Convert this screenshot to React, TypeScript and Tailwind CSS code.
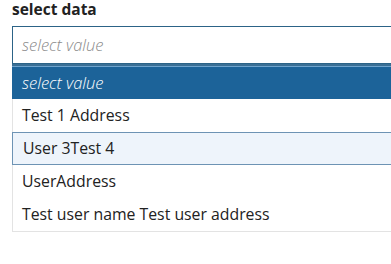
import React from "react";

export default function App() {
  const options = ["Test 1 Address", "User 3Test 4", "UserAddress", "Test user name Test user address"];
  return (
    <div className="w-[391px] h-[264px] bg-white overflow-hidden" style={{ fontFamily: '"Open Sans", sans-serif' }}>
      <div className="pl-[12px] w-[420px]">
        <div className="text-[15.5px] font-bold text-[#222] leading-[18px]">select data</div>
        <div className="mt-[8px] h-[38px] border border-[#2c6387] flex items-center pl-[9px] text-[16.5px] italic font-light text-[#8a8a8a]">
          select value
        </div>
        <div className="border-t-2 border-[#3a6f95]">
          <div className="h-[33px] bg-[#1c6399] border-t border-[#6fa3cc] flex items-center pl-[10px] text-[16.5px] italic font-light text-white">
            select value
          </div>
          <div className="border-x border-b border-[#e3e3e3]">
            {options.map((o, i) =>
              i === 1 ? (
                <div key={o} className="h-[33px] -mx-px bg-[#eef4fb] border-y border-l border-[#6d93b4] flex items-center pl-[10px] text-[15.8px] text-[#222]">
                  {o}
                </div>
              ) : (
                <div key={o} className="h-[33px] flex items-center pl-[9px] text-[15.8px] text-[#222]">
                  {o}
                </div>
              )
            )}
          </div>
        </div>
      </div>
    </div>
  );
}
